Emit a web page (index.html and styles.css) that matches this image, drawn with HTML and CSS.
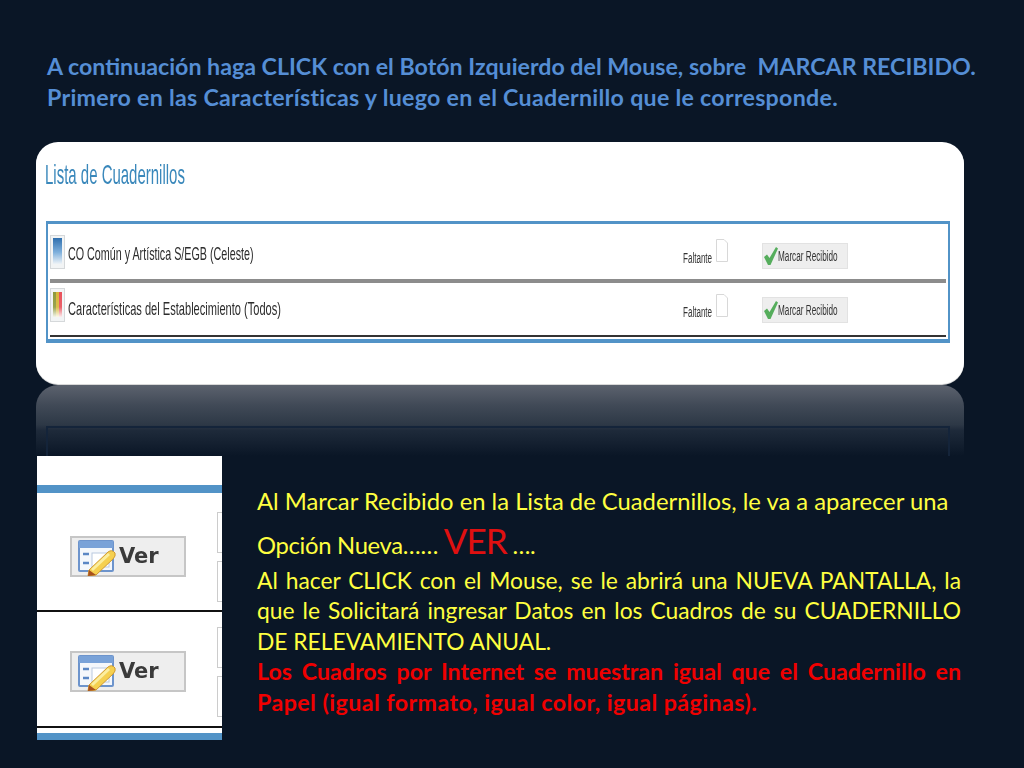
FILE: index.html
```html
<!DOCTYPE html>
<html lang="es">
<head>
<meta charset="utf-8">
<title>Lista de Cuadernillos</title>
<link rel="stylesheet" href="styles.css">
</head>
<body>
<main class="slide">
  <h1 class="intro"><span class="intro-line">A continuación haga CLICK con el Botón Izquierdo del Mouse, sobre&nbsp; MARCAR RECIBIDO.</span><span class="intro-line wide">Primero en las Características y luego en el Cuadernillo que le corresponde.</span></h1>

  <section class="card">
    <h2 class="card-title"><span class="squeeze title-text">Lista de Cuadernillos</span></h2>
    <div class="list">
      <div class="row row-gray">
        <svg class="book" viewBox="0 0 15 34"><defs><linearGradient id="b1" x1="0" y1="0" x2="0" y2="1"><stop offset="0" stop-color="#2f6fae"/><stop offset=".55" stop-color="#7fb0dc"/><stop offset="1" stop-color="#eef3f7"/></linearGradient></defs><rect x=".5" y=".5" width="14" height="33" fill="#f2f4f5" stroke="#d5d8da"/><rect x="3" y="3" width="9" height="26" fill="url(#b1)"/></svg>
        <span class="row-name"><span class="squeeze name-a">CO Común y Artística S/EGB (Celeste)</span></span>
        <span class="status"><span class="squeeze status-text">Faltante</span></span>
        <svg class="doc" viewBox="0 0 12 23"><path d="M.5.5H8L11.500 4V22.500H.5Z" fill="#fff" stroke="#d8d8d8"/></svg>
        <span class="mark"><svg class="check" viewBox="0 0 14 18"><path d="M0 10L3 7.500L5.500 11L12 0L14 1.500L6.500 18H4Z" fill="#55ad5c"/></svg><span class="squeeze mark-text">Marcar Recibido</span></span>
      </div>
      <div class="row row-dark">
        <svg class="book" viewBox="0 0 15 34"><defs><linearGradient id="b2" x1="0" y1="0" x2="0" y2="1"><stop offset="0" stop-color="#fff" stop-opacity="0"/><stop offset=".6" stop-color="#fff" stop-opacity=".1"/><stop offset="1" stop-color="#fff" stop-opacity=".9"/></linearGradient></defs><rect x=".5" y=".5" width="14" height="33" fill="#f2f4f5" stroke="#d5d8da"/><rect x="3" y="4" width="3" height="25" fill="#8f9a3c"/><rect x="6" y="4" width="3" height="25" fill="#d8b53a"/><rect x="9" y="4" width="3" height="25" fill="#e8505a"/><rect x="3" y="4" width="9" height="25" fill="url(#b2)"/></svg>
        <span class="row-name"><span class="squeeze name-b">Características del Establecimiento (Todos)</span></span>
        <span class="status"><span class="squeeze status-text">Faltante</span></span>
        <svg class="doc" viewBox="0 0 12 23"><path d="M.5.5H8L11.500 4V22.500H.5Z" fill="#fff" stroke="#d8d8d8"/></svg>
        <span class="mark"><svg class="check" viewBox="0 0 14 18"><path d="M0 10L3 7.500L5.500 11L12 0L14 1.500L6.500 18H4Z" fill="#55ad5c"/></svg><span class="squeeze mark-text">Marcar Recibido</span></span>
      </div>
    </div>
  </section>

  <div class="reflection"><div class="reflection-box"></div></div>

  <section class="lower">
    <div class="shot">
      <div class="shot-top"></div>
      <div class="shot-row first">
        <span class="ver"><svg class="ver-icon" viewBox="0 0 38 36"><rect x="1" y="1" width="34" height="30" rx="1" fill="#f4f7fb" stroke="#6d94cc" stroke-width="2"/><rect x="1" y="1" width="34" height="7" fill="#79a2d8"/><path d="M5 14H11M5 23H11" stroke="#5a86c4" stroke-width="2.500"/><rect x="14" y="13" width="17" height="14" fill="#fff" stroke="#b9c9e0"/><path d="M11 30L30 12Q34 9 37 13Q38 16 35 19L18 35L10 36Z" fill="#f5d050" stroke="#d09a30"/><path d="M14 30L31 14" stroke="#fbeea0" stroke-width="3"/><path d="M10 36L11 30L18 35Z" fill="#a8501c"/></svg>Ver</span>
        <div class="side"><i></i><i></i></div>
      </div>
      <div class="shot-row second">
        <span class="ver"><svg class="ver-icon" viewBox="0 0 38 36"><rect x="1" y="1" width="34" height="30" rx="1" fill="#f4f7fb" stroke="#6d94cc" stroke-width="2"/><rect x="1" y="1" width="34" height="7" fill="#79a2d8"/><path d="M5 14H11M5 23H11" stroke="#5a86c4" stroke-width="2.500"/><rect x="14" y="13" width="17" height="14" fill="#fff" stroke="#b9c9e0"/><path d="M11 30L30 12Q34 9 37 13Q38 16 35 19L18 35L10 36Z" fill="#f5d050" stroke="#d09a30"/><path d="M14 30L31 14" stroke="#fbeea0" stroke-width="3"/><path d="M10 36L11 30L18 35Z" fill="#a8501c"/></svg>Ver</span>
        <div class="side"><i></i><i></i></div>
      </div>
      <div class="shot-bottom"></div>
    </div>
    <div class="copy">
      <p class="plain">Al Marcar Recibido en la Lista de Cuadernillos, le va a aparecer una</p>
      <p class="plain option">Opción Nueva…… <span class="big">VER</span> ….</p>
      <p class="body-text"><span class="full">Al hacer CLICK con el Mouse, se le abrirá una NUEVA PANTALLA, la</span><span class="full">que le Solicitará ingresar Datos en los Cuadros de su CUADERNILLO</span><span class="tail">DE RELEVAMIENTO ANUAL.</span></p>
      <p class="alert"><span class="full">Los Cuadros por Internet se muestran igual que el Cuadernillo en</span><span class="tail">Papel (igual formato, igual color, igual páginas).</span></p>
    </div>
  </section>
</main>
</body>
</html>
```
FILE: styles.css
```css
* { box-sizing: border-box; }
html, body { margin: 0; padding: 0; }
body { background: #0a1626; font-family: "Lato", "Open Sans", sans-serif; }
.slide { width: 1024px; height: 768px; overflow: hidden; padding-top: 51px; background: #0a1626; }
.intro { margin: 0 0 30px 47px; font-size: 23.200px; line-height: 30.500px; font-weight: 700; color: #558ed5; white-space: nowrap; }
.intro-line { display: block; }
.wide { letter-spacing: .28px; }

.squeeze { display: inline-block; transform-origin: 0 50%; white-space: nowrap; font-family: "Liberation Sans", sans-serif; }
.card { margin-left: 36px; width: 928px; height: 242px; background: #fff; border-radius: 22px; padding: 16px 14px 0 9px; box-shadow: 0 1px 0 #d8d8d8; }
.card-title { margin: 0 0 33px; height: 30px; font-size: 28px; line-height: 30px; font-weight: 400; color: #3a88bb; filter: blur(.3px); }
.title-text { transform: scaleX(.535); }
.list { height: 122px; border: 2px solid #5293c7; border-bottom-width: 4px; padding: 0 2px; box-shadow: inset 0 1px 0 #5293c7; filter: blur(.4px); margin-left: 1px; }
.row { display: flex; align-items: flex-start; }
.row-gray { height: 60px; border-bottom: 4px solid #8c8c8c; }
.row-dark { height: 54px; border-bottom: 2px solid #333; }
.book { width: 15px; height: 34px; margin: 12px 3px 0 0; flex: none; }
.row-name { width: 615px; margin-top: 20px; font-size: 19px; line-height: 20px; color: #2c2c2c; flex: none; }
.name-a { transform: scaleX(.565); }
.name-b { transform: scaleX(.583); }
.status { width: 33px; margin-top: 27px; font-size: 14px; line-height: 15px; color: #333; flex: none; }
.status-text { transform: scaleX(.575); }
.doc { width: 12px; height: 23px; margin-top: 16px; flex: none; }
.mark { width: 86px; height: 26px; margin: 20px 0 0 34px; display: flex; align-items: center; padding-left: 1px; background: #eee; border: 1px solid #e2e2e2; font-size: 14px; line-height: 14px; color: #333; flex: none; }
.mark-text { transform: scaleX(.585); }
.check { width: 14px; height: 18px; flex: none; }
.row-dark .book { margin-top: 5px; }
.row-dark .row-name { margin-top: 15px; }
.row-dark .status { margin-top: 21px; }
.row-dark .doc { margin-top: 11px; }
.row-dark .mark { margin-top: 14px; }

.reflection { margin: 1px 0 0 36px; width: 928px; height: 71px; border-radius: 22px 22px 0 0; padding: 41px 14px 0 10px; background: linear-gradient(#5c626e, #414a57 28%, #2d3846 56%, #1e2a3a 64%, #0a1626); }
.reflection-box { height: 30px; border: 2px solid #14243a; border-bottom: 0; }

.lower { display: flex; margin-left: 37px; }
.shot { width: 185px; height: 284px; background: #fff; padding-top: 29px; overflow: hidden; flex: none; }
.shot-top { height: 8px; background: #5293c7; }
.shot-row { height: 119px; border-bottom: 2px solid #111; display: flex; justify-content: space-between; padding-left: 33px; }
.shot-row.first { padding-top: 43px; }
.shot-row.second { height: 116px; padding-top: 39px; }
.shot-bottom { height: 7px; margin-top: 5px; background: #5293c7; }
.ver { width: 116px; height: 41px; display: flex; align-items: center; gap: 3px; padding-left: 6px; background: #eee; border: 2px solid #c6c6c6; font-family: "DejaVu Sans", sans-serif; font-size: 21px; font-weight: 700; line-height: 1; color: #3a3a3a; filter: blur(.5px); }
.ver-icon { width: 38px; height: 36px; flex: none; margin-top: 2px; }
.side { width: 5px; display: flex; flex-direction: column; gap: 8px; margin-top: -24px; }
.side i { display: block; height: 41px; border: 1px solid #ccc; border-right: 0; }

.copy { width: 704px; margin-left: 35px; padding-top: 30px; color: #ffff40; font-size: 23.800px; line-height: 30.500px; }
.copy p { margin: 0; }
.plain { white-space: nowrap; }
.option { height: 48px; line-height: 46px; letter-spacing: -.3px; }
.big { font-size: 35px; letter-spacing: -1px; color: #e01010; }
.full { display: block; white-space: nowrap; text-align: justify; text-align-last: justify; }
.tail { display: block; white-space: nowrap; }
.body-text { font-size: 22.800px; }
.alert { color: #f00000; font-weight: 700; font-size: 23.200px; }
.alert .tail { letter-spacing: .45px; }
```
